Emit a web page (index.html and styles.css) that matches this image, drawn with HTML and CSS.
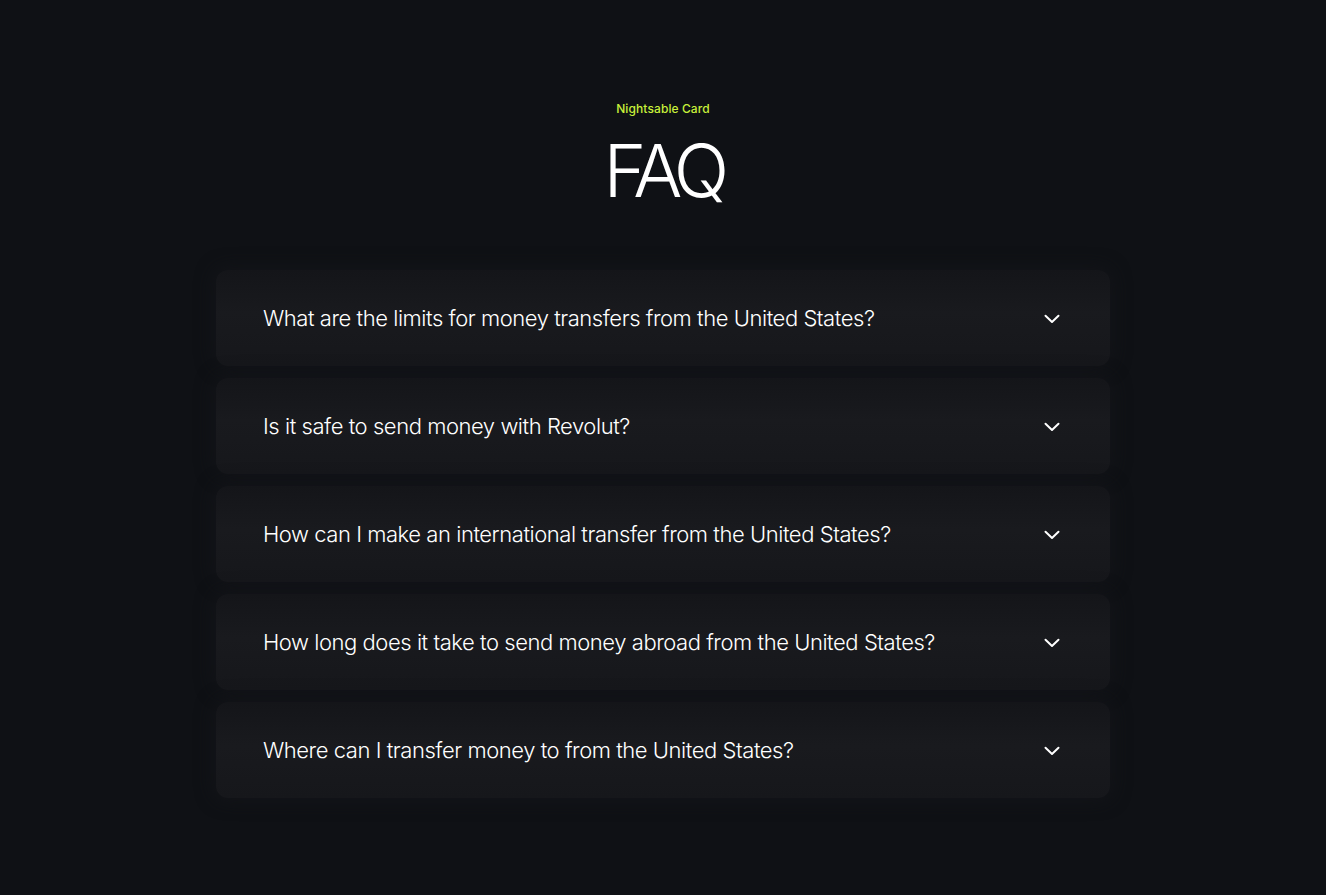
FILE: index.html
```html
<!DOCTYPE html>
<html lang="en">
<head>
<meta charset="utf-8">
<title>FAQ</title>
<link rel="stylesheet" href="styles.css">
</head>
<body>
<section class="faq">
  <p class="eyebrow">Nightsable Card</p>
  <h1 class="title">FAQ</h1>
  <div class="list">
    <div class="item"><span class="q">What are the limits for money transfers from the United States?</span><svg class="chev" viewBox="0 0 16 10" width="16" height="10"><path d="M1.5 1.8 L8 8 L14.5 1.8" fill="none" stroke="#fff" stroke-width="2" stroke-linecap="round" stroke-linejoin="round"/></svg></div>
    <div class="item"><span class="q">Is it safe to send money with Revolut?</span><svg class="chev" viewBox="0 0 16 10" width="16" height="10"><path d="M1.5 1.8 L8 8 L14.5 1.8" fill="none" stroke="#fff" stroke-width="2" stroke-linecap="round" stroke-linejoin="round"/></svg></div>
    <div class="item"><span class="q">How can I make an international transfer from the United States?</span><svg class="chev" viewBox="0 0 16 10" width="16" height="10"><path d="M1.5 1.8 L8 8 L14.5 1.8" fill="none" stroke="#fff" stroke-width="2" stroke-linecap="round" stroke-linejoin="round"/></svg></div>
    <div class="item"><span class="q">How long does it take to send money abroad from the United States?</span><svg class="chev" viewBox="0 0 16 10" width="16" height="10"><path d="M1.5 1.8 L8 8 L14.5 1.8" fill="none" stroke="#fff" stroke-width="2" stroke-linecap="round" stroke-linejoin="round"/></svg></div>
    <div class="item"><span class="q">Where can I transfer money to from the United States?</span><svg class="chev" viewBox="0 0 16 10" width="16" height="10"><path d="M1.5 1.8 L8 8 L14.5 1.8" fill="none" stroke="#fff" stroke-width="2" stroke-linecap="round" stroke-linejoin="round"/></svg></div>
  </div>
</section>
</body>
</html>
```
FILE: styles.css
```css
html, body {
  margin: 0;
  padding: 0;
  background: #0f1115;
  height: 100%;
}
body {
  font-family: Inter, "Noto Sans", sans-serif;
  color: #fff;
}
.faq {
  display: flex;
  flex-direction: column;
  align-items: center;
  padding-top: 101px;
}
.eyebrow {
  margin: 0;
  font-size: 12px;
  line-height: 16px;
  font-weight: 500;
  color: #c8f03a;
  letter-spacing: 0.1px;
}
.title {
  margin: 14px 0 0;
  font-size: 73px;
  line-height: 80px;
  font-weight: 300;
  letter-spacing: -6.6px;
}
.list {
  margin-top: 59px;
  width: 894px;
  display: flex;
  flex-direction: column;
  gap: 12px;
}
.item {
  height: 96px;
  box-sizing: border-box;
  padding: 0 50px 0 47px;
  display: flex;
  align-items: center;
  justify-content: space-between;
  background: linear-gradient(180deg, #141519 0%, #191a1e 45%, #16171b 100%);
  border-radius: 12px;
  box-shadow: 0 0 18px 2px rgba(20, 21, 25, 0.9);
}
.q {
  font-size: 22px;
  font-weight: 300;
  letter-spacing: -0.45px;
  color: #fff;
}
.chev {
  display: block;
  margin-top: 1px;
}
```
